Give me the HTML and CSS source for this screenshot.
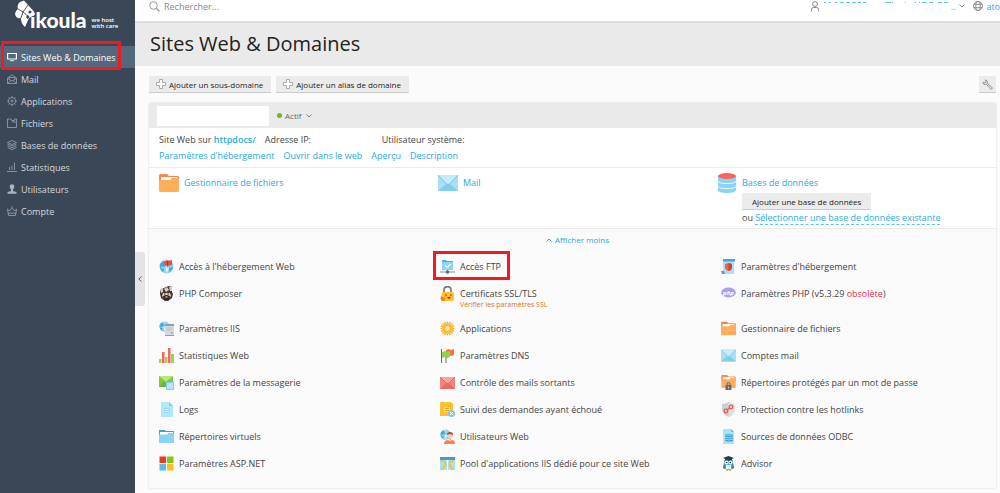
FILE: index.html
```html
<!DOCTYPE html>
<html lang="fr">
<head>
    <meta charset="UTF-8">
    <meta name="viewport" content="width=device-width, initial-scale=1.0">
    <title>Sites Web &amp; Domaines</title>
    <link rel="stylesheet" href="styles.css">
</head>
<body>
    <!-- shared icons -->
    <svg class="sprite" aria-hidden="true">
        <symbol id="folder" viewBox="0 0 20 18">
            <path d="M0 1.500Q0 0 1.500 0H8l2 2h8.500Q20 2 20 3.500V8H0z" fill="#f98450"/>
            <path d="M2 3h16v4H2z" fill="#fff"/>
            <path d="M0 6h11l2-2h7v12.500Q20 18 18.500 18h-17Q0 18 0 16.500z" fill="#ffae5c"/>
        </symbol>
        <symbol id="envelope" viewBox="0 0 20 16">
            <rect width="20" height="16" rx="1" fill="#a9def5"/>
            <path d="M0 16l8-7h4l8 7z" fill="#7fcdf0"/>
            <path d="M0 0h20l-8.500 9q-1.500 1-3 0z" fill="#c5ecfb"/>
            <path d="M0 0l8.500 9q1.500 1 3 0L20 0" fill="none" stroke="#72b8d8" stroke-width=".8"/>
        </symbol>
        <symbol id="plus" viewBox="0 0 10 10">
            <path d="M3.500.5h3v3h3v3h-3v3h-3v-3h-3v-3h3z" fill="#fafafa" stroke="#999" stroke-width=".8"/>
        </symbol>
        <symbol id="globe" viewBox="0 0 15 15">
            <circle cx="7.500" cy="7.500" r="7" fill="#8fd3f5"/>
            <path d="M1 5l3-3 2 1 1 3-3 2 1 3-1 2Q0 10 1 5zM10 9l3-1 1 1-3 4-1-2z" fill="#4aa8d6"/>
            <path d="M5 1l3 0-1 2zM6 8l4 1-2 5zM2 7l2 2-1 1z" fill="#e8f8ff"/>
        </symbol>
        <symbol id="chevron" viewBox="0 0 6 4">
            <path d="M.5.5L3 3 5.500.5" fill="none" stroke="currentColor"/>
        </symbol>
    </svg>

    <div class="layout">
        <aside class="sidebar">
            <div class="logo">
                <svg class="logo-mark" viewBox="0 0 22 28">
                    <path d="M6 2L10 .5 14 5l6 6.500L20.500 15 15 18l-4 9q-4-3-4-9-5 1-6-4 0-3 3-5-1.500-4 2-7z" fill="#fff"/>
                    <path d="M4 9l5 3 6 5M14 5L9 12l-2 6" fill="none" stroke="#3a4757" stroke-width=".9"/>
                    <circle cx="16" cy="12" r="1.600" fill="#3a4757"/>
                    <path d="M12 17l2-2 1.500 2-2 2z" fill="#3a4757"/>
                </svg>
                <span class="logo-name">ikoula</span>
                <span class="logo-tag">we host<br>with care</span>
            </div>
            <nav class="menu">
                <a href="#" class="menu-item active marked">
                    <svg viewBox="0 0 10 10"><path d="M.6 1.500h8.800v5.500H.6z" fill="none" stroke="#fff" stroke-width="1.200"/><path d="M3 7.500h4v1.500H3z" fill="#fff"/></svg>
                    Sites Web &amp; Domaines
                </a>
                <a href="#" class="menu-item">
                    <svg viewBox="0 0 10 10"><path d="M.5 4L5 .8 9.500 4v5.500h-9zM2 5V3.500h6V5M.5 4.500L5 7l4.500-2.500M.5 9.500L4 6.500M9.500 9.500L6 6.500"/></svg>
                    Mail
                </a>
                <a href="#" class="menu-item">
                    <svg viewBox="0 0 10 10"><circle cx="5" cy="5" r="3.600"/><circle cx="5" cy="5" r="1"/><path d="M5 0v1.500M5 8.500V10M0 5h1.500M8.500 5H10M1.500 1.500l1 1M7.500 7.500l1 1M1.500 8.500l1-1M7.500 2.500l1-1"/></svg>
                    Applications
                </a>
                <a href="#" class="menu-item">
                    <svg viewBox="0 0 10 10"><path d="M.5 1h3.500l1 1.500h2.500V1h2v8.500h-9zM5 2.500L6 4h3.500"/></svg>
                    Fichiers
                </a>
                <a href="#" class="menu-item">
                    <svg viewBox="0 0 10 10"><path d="M5 .5L9.500 2.500 5 4.500.5 2.500zM.5 4L5 6l4.500-2M.5 5.800L5 7.800l4.500-2M.5 7.500L5 9.500l4.500-2"/></svg>
                    Bases de données
                </a>
                <a href="#" class="menu-item">
                    <svg viewBox="0 0 10 10"><path d="M0 9.500h10M2.500 8V5M5 8V3.500M7.500 8V.5"/></svg>
                    Statistiques
                </a>
                <a href="#" class="menu-item">
                    <svg viewBox="0 0 10 10"><path d="M5 .3a2.300 2.300 0 0 1 2.300 2.500Q7 5 6 5.500V7l3.500 1v1.700h-9V8L4 7V5.500Q3 5 2.700 2.800A2.300 2.300 0 0 1 5 .3z" fill="#aab3bc" stroke="none"/></svg>
                    Utilisateurs
                </a>
                <a href="#" class="menu-item">
                    <svg viewBox="0 0 10 10"><path d="M1.500 9.500h7l1-6-2.300 1.200L5 1.500 2.800 4.700.5 3.500zM1 7.200h8M5 .2v1M.2 3h.6M9.200 3h.6"/></svg>
                    Compte
                </a>
            </nav>
            <button class="collapse" aria-label="Réduire le menu">
                <svg viewBox="0 0 4 6"><path d="M3.300.5L.8 3l2.500 2.500" fill="none" stroke="#555"/></svg>
            </button>
        </aside>

        <main class="content">
            <header class="topbar">
                <label class="search">
                    <svg viewBox="0 0 11 11"><circle cx="4.500" cy="4.500" r="3.800" fill="none" stroke="#999"/><path d="M7.300 7.300l3 3" stroke="#999" stroke-width="1.400"/></svg>
                    <input type="search" placeholder="Rechercher..." aria-label="Rechercher">
                </label>
                <div class="account">
                    <svg class="icon-user" viewBox="0 0 8 11"><circle cx="4" cy="3" r="2.400" fill="none" stroke="#888"/><path d="M.5 10.500V8.500Q.5 6.500 2.500 6.500h3Q7.500 6.500 7.500 8.500v2" fill="none" stroke="#888"/></svg>
                    <a href="#" class="account-name" aria-label="Compte">
                        <svg viewBox="0 0 128 10"><path d="M1 1.500h2M6 1.500h2M12 1.500h2M17 1.500h4M23 1.500h4M29 1.500h4M35 1.500h3M40 1.500h3M62 1.500h6M69 1.500h1M82 1.500h1M92 1.500h1M96 1.500h1M99 1.500h5M106 1.500h4M115 1.500h4M121 1.500h4" stroke="#5cc4ea"/></svg>
                        ..
                    </a>
                    <svg class="icon-chevron"><use href="#chevron"/></svg>
                    <svg class="icon-globe" viewBox="0 0 10 10"><g fill="none" stroke="#777" stroke-width=".8"><circle cx="5" cy="5" r="4.500"/><ellipse cx="5" cy="5" rx="2.200" ry="4.500"/><path d="M.8 3.300h8.400M.8 6.700h8.400"/></g></svg>
                    <a href="#">ato</a>
                </div>
            </header>

            <div class="title-bar">
                <h1>Sites Web &amp; Domaines</h1>
            </div>

            <div class="page">
                <div class="toolbar">
                    <button class="btn"><svg><use href="#plus"/></svg>Ajouter un sous-domaine</button>
                    <button class="btn"><svg><use href="#plus"/></svg>Ajouter un alias de domaine</button>
                    <button class="btn btn-tool" aria-label="Paramètres">
                        <svg viewBox="0 0 11 11"><path d="M1 3.200Q.8 5.500 3.200 5.700L4.500 5.300 8.500 10Q9.600 10.600 10.300 9.500 10.500 8.800 9.800 8.200L5.500 4.500Q6.200 1.500 3.300.8L4.200 2.700 3 3.800z" fill="#ddd" stroke="#888" stroke-width=".8"/></svg>
                    </button>
                </div>

                <section class="panel">
                    <div class="panel-head">
                        <div class="domain-name"></div>
                        <button class="status"><span class="dot"></span>Actif<svg class="icon-chevron"><use href="#chevron"/></svg></button>
                    </div>

                    <div class="info">
                        <div class="info-row">
                            <span>Site Web sur <a href="#"><b>httpdocs/</b></a></span>
                            <span class="ip">Adresse IP:</span>
                            <span>Utilisateur système:</span>
                        </div>
                        <div class="info-row links">
                            <a href="#">Paramètres d'hébergement</a>
                            <a href="#">Ouvrir dans le web</a>
                            <a href="#">Aperçu</a>
                            <a href="#">Description</a>
                        </div>
                    </div>

                    <div class="services">
                        <div class="service">
                            <svg><use href="#folder"/></svg>
                            <a href="#">Gestionnaire de fichiers</a>
                        </div>
                        <div class="service">
                            <svg><use href="#envelope"/></svg>
                            <a href="#">Mail</a>
                        </div>
                        <div class="service">
                            <svg viewBox="0 0 19 20"><path d="M.5 3v14q0 3 9 3t9-3V3z" fill="#8ad3f4"/><path d="M.5 8q0 2.500 9 2.500t9-2.500M.5 13q0 2.500 9 2.500t9-2.500" fill="none" stroke="#e6f7ff"/><ellipse cx="9.500" cy="3" rx="9" ry="3" fill="#fb625c"/></svg>
                            <div class="service-body">
                                <a href="#">Bases de données</a>
                                <button class="btn">Ajouter une base de données</button>
                                <div>ou <a href="#" class="dashed">Sélectionner une base de données existante</a></div>
                            </div>
                        </div>
                    </div>

                    <div class="more">
                        <button class="toggle"><svg class="icon-chevron up"><use href="#chevron"/></svg>Afficher moins</button>
                        <div class="tools">
                            <a href="#" class="tool">
                                <svg viewBox="0 0 15 15"><use href="#globe"/><path d="M5 2.500l3-1.500 1 1 4-1v5l-4 1-1-1-2 1z" fill="#f4483c"/><path d="M8 2v5l1 .5V2.500z" fill="#b82a26"/></svg>
                                <span>Accès à l'hébergement Web</span>
                            </a>
                            <a href="#" class="tool marked">
                                <svg viewBox="0 0 15 15"><path d="M2 1h4l1 1h6v9H2z" fill="#4faedb"/><path d="M2 3h11v8H2z" fill="#8ad5f6"/><path d="M5 6.500l2 2 3.500-3.500" fill="none" stroke="#fff" stroke-width="1.200"/><path d="M0 13h15" stroke="#8a9197"/><path d="M7.500 11v1" stroke="#8a9197"/><circle cx="7.500" cy="13" r="1.700" fill="#626b72"/></svg>
                                <span>Accès FTP</span>
                            </a>
                            <a href="#" class="tool">
                                <svg viewBox="0 0 15 15"><path d="M2 1h11v14H2z" fill="#a8e0fa"/><path d="M2 0h12v2.500H2zM0 12h3l1 3H1z" fill="#46a4cf"/><path d="M4 5l3.500-1L11 5v3q0 3-3.500 4Q4 11 4 8z" fill="#f95d41"/><path d="M7.500 4L11 5v3q0 3-3.500 4z" fill="#dc3e2d"/></svg>
                                <span>Paramètres d'hébergement</span>
                            </a>

                            <a href="#" class="tool">
                                <svg viewBox="0 0 15 15"><path d="M1 5l1-2 3-1 2-1 3-1 3 1v5l1 2-1 4-4 3H6l-4-3-1-4z" fill="#443a35"/><path d="M1 3l3-1v4L2 7zM5 3l3-2 2 3-3 2zM10 1h3v4l-2 0z" fill="#d8cfc3"/><path d="M4 7h7l1 3-2 2H5l-2-2z" fill="#efd0b6"/><path d="M4 10l3-1h1l3 1-1 4H5z" fill="#33251f"/><path d="M5 8h1.500M8.500 8H10" stroke="#33251f"/><path d="M6.500 11h2" stroke="#fff"/></svg>
                                <span>PHP Composer</span>
                            </a>
                            <a href="#" class="tool">
                                <svg viewBox="0 0 15 15"><path d="M4 7V4q0-3.300 3.500-3.300T11 4v3" fill="none" stroke="#70777c" stroke-width="1.600"/><rect x="1.500" y="6" width="12.500" height="9" rx="2" fill="#ffc02e"/><circle cx="6" cy="9" r=".8" fill="#553c20"/><circle cx="11" cy="9" r=".8" fill="#553c20"/><path d="M7 11h4q-1 2-2 2t-2-2z" fill="#b83a25"/><path d="M1 10l2 1.500 2 .5v2l-2 1H2l-1.500-2z" fill="#ee7b22"/></svg>
                                <span>Certificats SSL/TLS<small>Vérifier les paramètres SSL</small></span>
                            </a>
                            <a href="#" class="tool">
                                <svg viewBox="0 0 15 15"><ellipse cx="7.500" cy="6.500" rx="7.300" ry="4.900" fill="#a7a1ee"/><text x="7.500" y="8.500" class="php">php</text></svg>
                                <span>Paramètres PHP (v5.3.29 <em>obsolète</em>)</span>
                            </a>

                            <a href="#" class="tool">
                                <svg viewBox="0 0 15 15"><use href="#globe" width="11" height="11"/><path d="M6 3h9v11H6z" fill="#d2dbe2"/><path d="M6 3h9v2H6z" fill="#8d9ca7"/><path d="M7.500 7h6M7.500 9h6" stroke="#a9b8c3" stroke-width=".8"/><path d="M12 12h1.500" stroke="#ef4a38"/><path d="M6 14.500h9" stroke="#8d9ca7"/></svg>
                                <span>Paramètres IIS</span>
                            </a>
                            <a href="#" class="tool">
                                <svg viewBox="0 0 15 15"><path d="M7.500.5v14M.5 7.500h14M2.500 2.500l10 10M12.500 2.500l-10 10M4.800 1l5.400 13M10.200 1L4.800 14M1 4.800l13 5.400M1 10.200l13-5.400" stroke="#ffae2b" stroke-width="1.500"/><circle cx="7.500" cy="7.500" r="5.300" fill="#ffbd2f"/><circle cx="7.500" cy="7.500" r="3" fill="#fff0b5" stroke="#f5a01d" stroke-width=".8"/></svg>
                                <span>Applications</span>
                            </a>
                            <a href="#" class="tool">
                                <svg><use href="#folder"/></svg>
                                <span>Gestionnaire de fichiers</span>
                            </a>

                            <a href="#" class="tool">
                                <svg viewBox="0 0 15 15"><path d="M0 11h2.500v4H0zM6 9h2.500v6H6zM12 6h3v9h-3z" fill="#9bd647"/><path d="M3 4h2.500v11H3zM9 0h2.500v15H9z" fill="#f16863"/></svg>
                                <span>Statistiques Web</span>
                            </a>
                            <a href="#" class="tool">
                                <svg viewBox="0 0 15 15"><path d="M6 2l3-1 2 1 3-1v6l-3 1-2-1-3 1z" fill="#fa7149"/><path d="M2 4l3-1 2 1 3-1v6l-3 1-2-1-3 1z" fill="#8ed44a"/><path d="M1.500 1v14M6 9v6" stroke="#8c6252"/></svg>
                                <span>Paramètres DNS</span>
                            </a>
                            <a href="#" class="tool">
                                <svg><use href="#envelope"/></svg>
                                <span>Comptes mail</span>
                            </a>

                            <a href="#" class="tool">
                                <svg viewBox="0 0 15 15"><path d="M0 1h14v11H0z" fill="#83c93b"/><path d="M0 1h14L7 7z" fill="#b8e978"/><path d="M0 12l5-6 2 1.500L9 6l5 6z" fill="#6db52e"/><path d="M7 7h8v8H7z" fill="#83cff2"/><path d="M9 8v6M11 8v6M13 8v6M8.300 12h1.400M10.300 10h1.400M12.300 12h1.400" stroke="#f3fbff" stroke-width=".8"/></svg>
                                <span>Paramètres de la messagerie</span>
                            </a>
                            <a href="#" class="tool">
                                <svg viewBox="0 0 15 15"><path d="M0 2h15v12H0z" fill="#f38581"/><path d="M0 14l6-6h3l6 6z" fill="#e96b68"/><path d="M0 2h15L9 8q-1.500 1-3 0z" fill="#f9a29e"/><path d="M0 2l6 6q1.500 1 3 0l6-6" fill="none" stroke="#d45b59" stroke-width=".7"/></svg>
                                <span>Contrôle des mails sortants</span>
                            </a>
                            <a href="#" class="tool">
                                <svg viewBox="0 0 15 15"><use href="#folder" width="15" height="13"/><path d="M6 10V9q0-1.300 1.500-1.300T9 9v1" fill="none" stroke="#666"/><path d="M4.500 10h6v5h-6z" fill="#686b6d"/><path d="M7.500 11.500v2" stroke="#ccc"/></svg>
                                <span>Répertoires protégés par un mot de passe</span>
                            </a>

                            <a href="#" class="tool">
                                <svg viewBox="0 0 15 15"><path d="M2 0h8l4 4v11H2z" fill="#b3e8fc"/><path d="M10 0l4 4h-4z" fill="#78cdee"/><path d="M5 6h6v5H5z" fill="#9bdaf5"/><path d="M6 7.500h4M6 9.500h4" stroke="#d4f2fd"/></svg>
                                <span>Logs</span>
                            </a>
                            <a href="#" class="tool">
                                <svg viewBox="0 0 15 15"><path d="M1 0h10l2 2v12H0V1z" fill="#ffc02f"/><path d="M4 5h6v5H4z" fill="#ffdb78"/><path d="M5 6.500h4M5 8.500h4" stroke="#eda51e"/><circle cx="11.500" cy="11.500" r="3.500" fill="#77c9ef"/><path d="M10 10l3 3M13 10l-3 3" stroke="#fff"/></svg>
                                <span>Suivi des demandes ayant échoué</span>
                            </a>
                            <a href="#" class="tool">
                                <svg viewBox="0 0 15 15"><path d="M1 2q4 0 6.500-2Q10 2 14 2v5q0 5-6.500 8Q1 12 1 7z" fill="#c8ced2"/><path d="M7.500 0Q10 2 14 2v5q0 5-6.500 8z" fill="#dce0e3"/><g fill="none" stroke="#f0583b" stroke-width="1.300"><circle cx="5" cy="9" r="1.800"/><circle cx="10" cy="5" r="1.800"/><path d="M6 8l3-2"/></g></svg>
                                <span>Protection contre les hotlinks</span>
                            </a>

                            <a href="#" class="tool">
                                <svg viewBox="0 0 15 15"><path d="M0 1h6l1 1h8v6H0z" fill="#459fcc"/><path d="M1 3h13v3H1z" fill="#fff"/><path d="M0 5.500h8L9.500 4H15v10H0z" fill="#8bd3f5"/></svg>
                                <span>Répertoires virtuels</span>
                            </a>
                            <a href="#" class="tool">
                                <svg viewBox="0 0 15 15"><use href="#globe" width="11" height="11"/><circle cx="10" cy="6.500" r="3" fill="#ffd0b0"/><path d="M7 6q0-3 3-3t3 3l-3-1z" fill="#98513d"/><path d="M4 15q0-4 4-4l2 1 2-1q3 0 3 4z" fill="#fb8150"/><path d="M9 9h2v2l-1 1-1-1z" fill="#f0b893"/></svg>
                                <span>Utilisateurs Web</span>
                            </a>
                            <a href="#" class="tool">
                                <svg viewBox="0 0 15 15"><path d="M2 0h8l3 3v12H2z" fill="#a9e2fa"/><path d="M10 0l3 3h-3z" fill="#65bfe5"/><path d="M4 6v5q0 1.500 4 1.500t4-1.500V6z" fill="#3e9bc9"/><path d="M4 8q4 2 8 0M4 10q4 2 8 0" fill="none" stroke="#bde9fb" stroke-width=".8"/><ellipse cx="8" cy="6" rx="4" ry="1.300" fill="#67bfe6"/></svg>
                                <span>Sources de données ODBC</span>
                            </a>

                            <a href="#" class="tool">
                                <svg viewBox="0 0 15 15"><path d="M.5.5H7V7H.5z" fill="#f03b18"/><path d="M8 .5h6.500V7H8z" fill="#80c813"/><path d="M.5 8H7v6.500H.5z" fill="#5fbce9"/><path d="M8 8h6.500v6.500H8z" fill="#ffbd24"/></svg>
                                <span>Paramètres ASP.NET</span>
                            </a>
                            <a href="#" class="tool">
                                <svg viewBox="0 0 15 15"><path d="M0 1h15v3H0z" fill="#439dcb"/><path d="M0 4h15v10H0z" fill="#a9e1f9"/><path d="M7 4h1v10H7z" fill="#fff"/><path d="M1 5q5 0 4 4t-4 4M14 5q-5 0-4 4t4 4" fill="none" stroke="#fbb92e" stroke-width="2" stroke-dasharray="2 .6"/></svg>
                                <span>Pool d'applications IIS dédié pour ce site Web</span>
                            </a>
                            <a href="#" class="tool">
                                <svg viewBox="0 0 15 15"><path d="M3 4h9v7q-1 3-4.500 3T3 11z" fill="#4ba9d3"/><path d="M7.500 0L13 2 7.500 4.500 2 2z" fill="#263b4b"/><path d="M4 3h7v1.500H4z" fill="#263b4b"/><circle cx="5.500" cy="6.500" r="1.900" fill="#fff"/><circle cx="9.500" cy="6.500" r="1.900" fill="#fff"/><circle cx="5.700" cy="6.500" r=".7"/><circle cx="9.300" cy="6.500" r=".7"/><path d="M7 7h1l-.5 1.500z" fill="#f7a427"/><path d="M5 9h5v4H5z" fill="#dff5fd"/><path d="M3 7L2 12l2 1zM12 7l1 5-2 1z" fill="#26688b"/><path d="M5 14.300h2M8 14.300h2" stroke="#f7a427"/></svg>
                                <span>Advisor</span>
                            </a>
                        </div>
                    </div>
                </section>
            </div>
        </main>
    </div>
</body>
</html>
```

FILE: styles.css
```css
*,
*::after {
    box-sizing: border-box;
}
body {
    margin: 0;
    font-family: "Open Sans", sans-serif;
    font-size: 9px;
    line-height: 15px;
    color: #444;
    background-color: #fbfbfb;
}
a {
    color: #28aade;
    text-decoration: none;
}
b {
    font-weight: 600;
}
button,
input {
    font: inherit;
    color: inherit;
    border: none;
    padding: 0;
    background: none;
}
button {
    cursor: pointer;
}
svg {
    flex: none;
}
.sprite {
    position: absolute;
    width: 0;
    height: 0;
}
.layout {
    display: flex;
    min-height: 100vh;
}

/* Sidebar */
.sidebar {
    position: relative;
    flex: none;
    width: 135px;
    background-color: #3a4757;
}
.logo {
    display: flex;
    height: 46px;
    padding-left: 14px;
    color: #fff;
}
.logo-mark {
    width: 22px;
    height: 28px;
    margin-right: -6px;
}
.logo-name {
    font-family: Lato, sans-serif;
    font-size: 21px;
    font-weight: 900;
    line-height: 40px;
}
.logo-tag {
    padding: 17px 0 0 5px;
    font-size: 6px;
    font-weight: 600;
    line-height: 6px;
    white-space: nowrap;
}
.menu-item {
    position: relative;
    display: flex;
    align-items: center;
    gap: 4px;
    height: 22px;
    padding-left: 7px;
    font-weight: 500;
    color: #d4d9de;
}
.menu-item svg {
    width: 10px;
    height: 10px;
    fill: none;
    stroke: #9aa5b0;
    stroke-width: 0.8;
}
.menu-item.active {
    color: #fff;
    background-color: #53687b;
}
.collapse {
    position: absolute;
    top: 252px;
    left: 100%;
    display: flex;
    align-items: center;
    justify-content: center;
    width: 10px;
    height: 54px;
    border-radius: 0 3px 3px 0;
    background-color: #e4e4e4;
}
.collapse svg {
    width: 4px;
    height: 6px;
}

/* Red frames round the items to click */
.marked::after {
    content: "";
    position: absolute;
    border: 3px solid #ed1c24;
}
.menu-item.marked::after {
    inset: -5px 14px -2px 1px;
}
.tool.marked::after {
    top: -8px;
    left: -7px;
    width: 77px;
    height: 29px;
}

/* Top bar */
.content {
    flex: 1;
    min-width: 0;
}
.topbar {
    display: flex;
    justify-content: space-between;
    height: 23px;
    padding-left: 14px;
    border-bottom: 2px solid #dcdcdc;
    background-color: #fff;
    overflow: hidden;
}
.search {
    display: flex;
    gap: 4px;
    height: 12px;
    align-items: center;
}
.search svg {
    width: 11px;
    height: 11px;
}
.search input {
    width: 200px;
    height: 12px;
    outline: none;
}
.search input::placeholder {
    color: #888;
    opacity: 1;
}
.account {
    display: flex;
    align-items: center;
    height: 12px;
}
.icon-user {
    width: 8px;
    height: 11px;
    margin-right: 4px;
}
.account-name {
    display: flex;
    align-items: center;
}
.account-name svg {
    width: 128px;
    height: 10px;
}
.icon-chevron {
    width: 6px;
    height: 4px;
    color: #888;
}
.icon-chevron.up {
    color: inherit;
    transform: rotate(180deg);
}
.account .icon-chevron {
    margin: 0 8px 0 4px;
}
.icon-globe {
    width: 10px;
    height: 10px;
    margin-right: 3px;
}
.title-bar {
    padding: 8px 15px 9px;
    background-color: #eaeaea;
}
h1 {
    margin: 0;
    font-size: 20px;
    font-weight: 500;
    line-height: 26px;
    color: #222;
}

/* Toolbar */
.page {
    padding: 10px 4px 4px 14px;
}
.toolbar {
    display: flex;
    gap: 5px;
    margin-bottom: 10px;
}
.btn {
    display: flex;
    align-items: center;
    gap: 3px;
    height: 17px;
    padding: 0 8px 0 7px;
    border-bottom: 1px solid #ccc;
    border-radius: 1px;
    font-size: 8px;
    font-weight: 500;
    color: #222;
    background-color: #ebebeb;
}
.btn svg {
    width: 10px;
    height: 10px;
}
.btn-tool {
    margin-left: auto;
    padding: 0 3px;
}
.btn-tool svg {
    width: 11px;
    height: 11px;
}

/* Domain panel */
.panel {
    border-radius: 2px;
    background-color: #fff;
    box-shadow: 0 0 2px #ccc;
}
.panel-head {
    display: flex;
    align-items: center;
    gap: 8px;
    height: 25px;
    padding-left: 8px;
    background-color: #eaeaea;
}
.domain-name {
    width: 112px;
    height: 20px;
    background-color: #fff;
}
.status {
    display: flex;
    align-items: center;
    gap: 3px;
    font-size: 8px;
    color: #666;
}
.status .icon-chevron {
    margin-left: 2px;
}
.dot {
    width: 5px;
    height: 5px;
    border-radius: 50%;
    background-color: #7ab51d;
}
.info {
    padding: 4px 10px 3px;
    border-bottom: 1px solid #ebebeb;
}
.info-row {
    display: flex;
    gap: 9px;
    line-height: 16px;
}
.info-row .ip {
    width: 108px;
}
.services {
    display: grid;
    grid-template-columns: repeat(3, 1fr);
    min-height: 61px;
    padding: 5px 0 3px 10px;
    border-bottom: 1px solid #ebebeb;
}
.service {
    display: flex;
    align-items: flex-start;
    gap: 5px;
    line-height: 20px;
}
.service svg {
    width: 20px;
    height: 20px;
}
.service-body {
    display: flex;
    flex-direction: column;
    align-items: flex-start;
    line-height: 15px;
}
.service-body > a {
    line-height: 20px;
}
.service-body .btn {
    padding: 0 10px;
}
.dashed {
    border-bottom: 1px dashed #5cc4ea;
}
.more {
    padding: 3px 0 5px 10px;
    background-color: #fafafa;
}
.toggle {
    display: flex;
    align-items: center;
    gap: 3px;
    margin: 0 auto 12px;
    font-size: 8px;
    color: #28aade;
}
.tools {
    display: grid;
    grid-template-columns: repeat(3, 1fr);
    column-gap: 6px;
}
.tool {
    position: relative;
    display: flex;
    align-items: flex-start;
    gap: 5px;
    padding-bottom: 12px;
    color: #444;
}
.tool svg {
    width: 15px;
    height: 15px;
}
.tool small {
    display: block;
    font-size: 7px;
    line-height: 8px;
    color: #d9731a;
}
.tool em {
    font-style: normal;
    color: #d9304f;
}
.php {
    font-size: 6px;
    font-style: italic;
    font-weight: 700;
    text-anchor: middle;
    fill: #fff;
}
```
